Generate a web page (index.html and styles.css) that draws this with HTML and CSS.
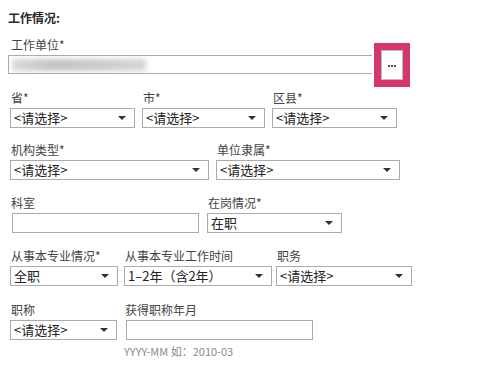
FILE: index.html
```html
<!DOCTYPE html>
<html lang="zh-CN">
<head>
<meta charset="utf-8">
<title>工作情况</title>
<link rel="stylesheet" href="styles.css">
</head>
<body>
<div class="page">
  <div class="title">工作情况:</div>

  <div class="unit">
    <div class="label unit-label">工作单位*</div>
    <div class="unit-row">
      <div class="input unit-input"><span class="blur"></span></div>
      <div class="more" aria-label="更多"><i class="dot"></i><i class="dot"></i><i class="dot"></i></div>
    </div>
  </div>

  <div class="row r2">
    <div class="field w125">
      <div class="label">省*</div>
      <div class="select"><span>&lt;请选择&gt;</span><i class="arrow"></i></div>
    </div>
    <div class="field w123">
      <div class="label">市*</div>
      <div class="select"><span>&lt;请选择&gt;</span><i class="arrow"></i></div>
    </div>
    <div class="field w125">
      <div class="label">区县*</div>
      <div class="select"><span>&lt;请选择&gt;</span><i class="arrow"></i></div>
    </div>
  </div>

  <div class="row r3">
    <div class="field w199">
      <div class="label">机构类型*</div>
      <div class="select"><span>&lt;请选择&gt;</span><i class="arrow"></i></div>
    </div>
    <div class="field w184">
      <div class="label">单位隶属*</div>
      <div class="select"><span>&lt;请选择&gt;</span><i class="arrow"></i></div>
    </div>
  </div>

  <div class="row r4">
    <div class="field w189">
      <div class="label">科室</div>
      <div class="input offset"></div>
    </div>
    <div class="field w135">
      <div class="label">在岗情况*</div>
      <div class="select"><span>在职</span><i class="arrow"></i></div>
    </div>
  </div>

  <div class="row r5">
    <div class="field w108">
      <div class="label">从事本专业情况*</div>
      <div class="select"><span>全职</span><i class="arrow"></i></div>
    </div>
    <div class="field w148">
      <div class="label">从事本专业工作时间</div>
      <div class="select"><span>1–2年（含2年）</span><i class="arrow"></i></div>
    </div>
    <div class="field w136">
      <div class="label">职务</div>
      <div class="select"><span>&lt;请选择&gt;</span><i class="arrow"></i></div>
    </div>
  </div>

  <div class="row r6">
    <div class="field w107">
      <div class="label">职称</div>
      <div class="select"><span>&lt;请选择&gt;</span><i class="arrow"></i></div>
    </div>
    <div class="field w189">
      <div class="label">获得职称年月</div>
      <div class="input offset"></div>
      <div class="hint">YYYY-MM 如：2010-03</div>
    </div>
  </div>
</div>
</body>
</html>
```

FILE: styles.css
```css
html, body {
  margin: 0;
  padding: 0;
  background: #ffffff;
}

.page {
  padding: 10px 0 0 10px;
  font-family: "Noto Sans CJK SC", "Noto Sans", "DejaVu Sans", sans-serif;
  color: #333;
  font-size: 12px;
}

.title {
  line-height: 16px;
  height: 16px;
  font-weight: 600;
  color: #2a2a2a;
  margin-left: -2px;
}

.label {
  line-height: 16px;
  height: 16px;
  margin-bottom: 2px;
  padding-left: 1px;
  color: #444;
  white-space: nowrap;
}

.unit {
  margin-top: 11px;
}

.unit-label {
  margin-bottom: 2px;
}

.unit-row {
  display: flex;
  align-items: flex-start;
}

.input {
  box-sizing: border-box;
  height: 20px;
  border: 1px solid #ababab;
  background: #fff;
}

.unit-input {
  width: 364px;
  margin-left: -2px;
  height: 19px;
  border-right: none;
  overflow: hidden;
}

.blur {
  display: block;
  margin: 3px 0 0 3px;
  width: 134px;
  height: 12px;
  background: linear-gradient(90deg, #d6d6d6, #bdbdbd 30%, #c4c4c4 60%, #d2d2d2);
  filter: blur(2.5px);
  opacity: 0.9;
}

.more {
  box-sizing: border-box;
  width: 22px;
  height: 30px;
  margin: -5px 0 -6px 9px;
  border: 1px solid #bcbcbc;
  background: #fff;
  outline: 7px solid #d5366d;
  display: flex;
  align-items: center;
  justify-content: center;
  gap: 1px;
  padding-top: 1px;
}

.dot {
  width: 2px;
  height: 2px;
  border-radius: 50%;
  background: #1f1f1f;
}

.row {
  display: flex;
}

.r2 { margin-top: 16px; gap: 7px; }
.r3 { margin-top: 14px; gap: 7px; }
.r4 { margin-top: 15px; gap: 8px; }
.r5 { margin-top: 15px; gap: 6px; }
.r5 .field:last-child { margin-left: -2px; }
.r6 { margin-top: 16px; gap: 7px; }

.field {
  display: flex;
  flex-direction: column;
}

.w107 { width: 107px; }
.w108 { width: 108px; }
.w123 { width: 123px; }
.w125 { width: 125px; }
.w135 { width: 135px; }
.w136 { width: 136px; }
.w148 { width: 148px; }
.w184 { width: 184px; }
.w189 { width: 189px; }
.w199 { width: 199px; }

.offset {
  margin-left: 2px;
  width: 187px;
}

.select {
  box-sizing: border-box;
  height: 20px;
  border: 1px solid #ababab;
  background: #fff;
  display: flex;
  align-items: center;
  justify-content: space-between;
  padding: 0 8px 0 3px;
  font-size: 13px;
  color: #222;
  white-space: nowrap;
}

.select span {
  line-height: 18px;
}

.arrow {
  width: 0;
  height: 0;
  border-left: 4px solid transparent;
  border-right: 4px solid transparent;
  border-top: 4px solid #333;
  flex: none;
}

.hint {
  margin-top: 3px;
  line-height: 16px;
  font-size: 11px;
  color: #8a8a8a;
  white-space: nowrap;
}
```
